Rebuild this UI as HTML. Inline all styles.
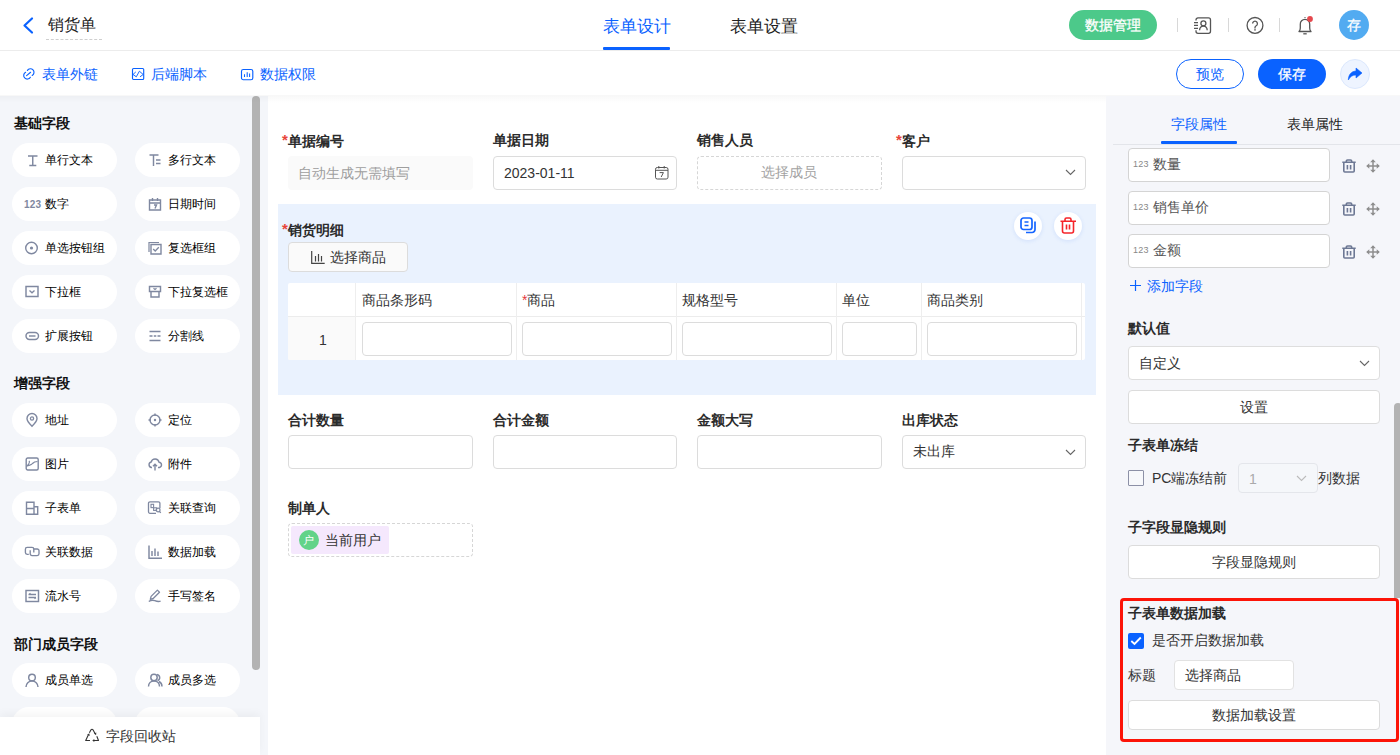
<!DOCTYPE html>
<html><head><meta charset="utf-8">
<style>
*{box-sizing:border-box;margin:0;padding:0}
html,body{width:1400px;height:755px;overflow:hidden;background:#fff;font-family:"Liberation Sans",sans-serif;color:#1f1f1f}
.a{position:absolute}
.t{position:absolute;white-space:nowrap;line-height:1}
svg{position:absolute;overflow:visible}
/* header */
#hdr{left:0;top:0;width:1400px;height:51px;background:#fff;border-bottom:1px solid #ececec}
#tb{left:0;top:51px;width:1400px;height:45px;background:#fff}
.pill{position:absolute;width:105px;height:34px;border-radius:17px;background:#fff}
.pill .t{left:33px;top:11px;font-size:12px;color:#000}
.pill svg{left:14px;top:11px}
.sec{position:absolute;left:14px;font-size:14px;font-weight:bold;color:#111;line-height:1}
.lbl{position:absolute;font-size:14px;font-weight:bold;color:#2b2b2b;line-height:1;white-space:nowrap}
.lbl i{font-style:normal;color:#e8453a;font-weight:bold;font-size:15px;position:relative;top:-1px}
.inp{position:absolute;height:34px;border:1px solid #dcdcdc;border-radius:4px;background:#fff}
.btnw{position:absolute;width:252px;border:1px solid #dcdcdc;border-radius:4px;background:#fff;font-size:14px;color:#333;text-align:center}
</style></head><body>

<!-- HEADER -->
<div id="hdr" class="a">
  <svg style="left:22px;top:17px" width="12" height="17" viewBox="0 0 12 17"><path d="M10 1.5 L2.5 8.5 L10 15.5" fill="none" stroke="#0a62ff" stroke-width="2.2" stroke-linecap="round" stroke-linejoin="round"/></svg>
  <div class="t" style="left:48px;top:17px;font-size:16px;color:#222">销货单</div>
  <div class="a" style="left:46px;top:39px;width:56px;height:0;border-top:1px dashed #cfcfcf"></div>

  <div class="t" style="left:603px;top:18px;font-size:16.5px;color:#0a62ff">表单设计</div>
  <div class="a" style="left:603px;top:47px;width:67px;height:3px;background:#0a62ff;border-radius:1px"></div>
  <div class="t" style="left:730px;top:18px;font-size:16.5px;color:#222">表单设置</div>

  <div class="a" style="left:1069px;top:10px;width:88px;height:30px;border-radius:15px;background:#4cc98a"></div>
  <div class="t" style="left:1085px;top:18px;font-size:14px;color:#fff;-webkit-text-stroke:0.3px #fff">数据管理</div>
  <div class="a" style="left:1177px;top:18px;width:1px;height:14px;background:#d8d8d8"></div>
  <div class="a" style="left:1228px;top:18px;width:1px;height:14px;background:#d8d8d8"></div>
  <div class="a" style="left:1279px;top:18px;width:1px;height:14px;background:#d8d8d8"></div>
  
  <svg style="left:1193px;top:16px" width="19" height="19" viewBox="0 0 19 19"><path d="M3 4.6V3.9a2 2 0 0 1 2-2h10.5a2 2 0 0 1 2 2v11.4a2 2 0 0 1-2 2H5a2 2 0 0 1-2-2V14.3" stroke="#555" stroke-width="1.3" fill="none"/><path d="M1 6.6h4M1 9.4h4M1 12.3h4" stroke="#555" stroke-width="1.3"/><circle cx="10.4" cy="7.3" r="2.5" stroke="#555" stroke-width="1.3" fill="none"/><path d="M6.6 14.2c0-2.3 1.7-4.2 3.8-4.2s3.8 1.9 3.8 4.2" stroke="#555" stroke-width="1.3" fill="none"/></svg>
  <svg style="left:1246px;top:17px" width="18" height="18" viewBox="0 0 18 18"><circle cx="9" cy="8.4" r="7.9" stroke="#555" stroke-width="1.3" fill="none"/><path d="M6.6 6.6a2.4 2.4 0 1 1 3.6 2.1c-0.8 0.5-1.2 1-1.2 1.9v0.8" stroke="#555" stroke-width="1.3" fill="none"/><circle cx="9" cy="12.9" r="0.8" fill="#555"/></svg>
  <svg style="left:1297px;top:16px" width="17" height="19" viewBox="0 0 17 19"><path d="M8 1.2v0.8" stroke="#555" stroke-width="1.4"/><path d="M2 15.5c1-0.8 1.3-1.8 1.3-3.5V8.2A4.7 4.7 0 0 1 8 3.3a4.7 4.7 0 0 1 4.7 4.9V12c0 1.7 0.3 2.7 1.3 3.5z" stroke="#555" stroke-width="1.3" fill="none" stroke-linejoin="round"/><path d="M6.3 17.8h3.4" stroke="#555" stroke-width="1.3"/><circle cx="13" cy="3" r="2.9" fill="#e5484d"/></svg>
<div class="a" style="left:1339px;top:10px;width:30px;height:30px;border-radius:15px;background:#52abf1"></div>
  <div class="t" style="left:1347px;top:18px;font-size:14px;color:#fff;-webkit-text-stroke:0.3px #fff">存</div>
</div>

<!-- TOOLBAR -->
<div id="tb" class="a">
  
  <svg style="left:22px;top:16px" width="14" height="14" viewBox="0 0 14 14"><path d="M3.6 5.3A3.6 3.6 0 1 0 8.4 10.3M5.4 3.4A3.6 3.6 0 1 1 10.2 8.5M4.6 8.6L8.6 5.3" stroke="#0a62ff" stroke-width="1.15" fill="none" stroke-linecap="round"/></svg>
  <svg style="left:131px;top:16px" width="14" height="14" viewBox="0 0 14 14"><rect x="1.5" y="1.5" width="11.2" height="11" rx="1" stroke="#0a62ff" stroke-width="1.15" fill="none"/><path d="M4.5 5.2L2 7.5 5.3 9.8 8.4 4.2 12.2 7.5 9.3 9.6" stroke="#0a62ff" stroke-width="0.95" fill="none" stroke-linejoin="round" stroke-linecap="round"/></svg>
  <svg style="left:240px;top:16px" width="14" height="14" viewBox="0 0 14 14"><rect x="1.5" y="2.5" width="11.3" height="10.2" rx="1.8" stroke="#0a62ff" stroke-width="1.15" fill="none"/><path d="M4.5 7.3v2.6M7.2 5.3v4.6M9.6 6.5v3.4" stroke="#0a62ff" stroke-width="1.05"/></svg>
<div class="t" style="left:42px;top:16px;font-size:14px;color:#0a62ff">表单外链</div>
  <div class="t" style="left:151px;top:16px;font-size:14px;color:#0a62ff">后端脚本</div>
  <div class="t" style="left:260px;top:16px;font-size:14px;color:#0a62ff">数据权限</div>
  <div class="a" style="left:1176px;top:8px;width:68px;height:30px;border-radius:15px;border:1px solid #0a62ff;background:#fff"></div>
  <div class="t" style="left:1196px;top:16px;font-size:14px;color:#0a62ff">预览</div>
  <div class="a" style="left:1258px;top:8px;width:68px;height:30px;border-radius:15px;background:#0a62ff"></div>
  <div class="t" style="left:1278px;top:16px;font-size:14px;color:#fff;-webkit-text-stroke:0.3px #fff">保存</div>
  <div class="a" style="left:1340px;top:8px;width:30px;height:30px;border-radius:15px;background:#eef4ff;border:1px solid #dce8fd"></div><svg style="left:1347px;top:16px" width="16" height="14" viewBox="0 0 16 14"><path d="M9 1l6 5-6 5V8C5.5 8 3.2 9.5 1.3 13 1.5 8 4 4.3 9 4z" fill="#0a62ff" stroke="#0a62ff" stroke-width="0.6" stroke-linejoin="round"/></svg>
</div>

<!-- LEFT PANEL -->
<div class="a" style="left:0;top:96px;width:268px;height:659px;background:#f4f6fa"></div>
<div class="sec" style="top:116px">基础字段</div>
<div class="sec" style="top:376px">增强字段</div>
<div class="sec" style="top:637px">部门成员字段</div>
<div class="pill" style="left:12px;top:143px"><svg width="14" height="14" viewBox="0 0 14 14" style="left:13px;top:10px"><path d="M3 3h9.5M4.3 12.5h7M7.75 3v9.5" stroke="#7f88a0" stroke-width="1.45" fill="none"/></svg><div class="t">单行文本</div></div>
<div class="pill" style="left:135px;top:143px"><svg width="14" height="14" viewBox="0 0 14 14" style="left:13px;top:10px"><path d="M1.5 2h9M5.5 2v11M8 7h4.5M8 10.5h4.5" stroke="#7f88a0" stroke-width="1.45" fill="none"/></svg><div class="t">多行文本</div></div>
<div class="pill" style="left:12px;top:187px"><svg width="14" height="14" viewBox="0 0 14 14" style="left:13px;top:10px"><text x="-0.9" y="11.2" style="font-family:'Liberation Sans';font-weight:bold;font-size:10px" fill="#7f88a0" letter-spacing="0.1">123</text></svg><div class="t">数字</div></div>
<div class="pill" style="left:135px;top:187px"><svg width="14" height="14" viewBox="0 0 14 14" style="left:13px;top:10px"><path d="M1.5 3h11v10h-11z M1.5 6h11 M4.5 1v3 M9.5 1v3 M6 8h2.5l-1.5 3.5" stroke="#7f88a0" stroke-width="1.4" fill="none"/></svg><div class="t">日期时间</div></div>
<div class="pill" style="left:12px;top:231px"><svg width="14" height="14" viewBox="0 0 14 14" style="left:13px;top:10px"><circle cx="6.5" cy="7" r="5.8" stroke="#7f88a0" stroke-width="1.4" fill="none"/><circle cx="6.5" cy="7" r="1.6" fill="#7f88a0"/></svg><div class="t">单选按钮组</div></div>
<div class="pill" style="left:135px;top:231px"><svg width="14" height="14" viewBox="0 0 14 14" style="left:13px;top:10px"><path d="M1 11V1.5h10" stroke="#7f88a0" stroke-width="1.2" fill="none"/><path d="M3 3.5h10v9.5H3z" stroke="#7f88a0" stroke-width="1.4" fill="none"/><path d="M5.2 8l2 2 3.6-3.8" stroke="#7f88a0" stroke-width="1.3" fill="none"/></svg><div class="t">复选框组</div></div>
<div class="pill" style="left:12px;top:275px"><svg width="14" height="14" viewBox="0 0 14 14" style="left:13px;top:10px"><path d="M1 1.5h12v10H1z" stroke="#7f88a0" stroke-width="1.45" fill="none"/><path d="M4.5 5.5l2.5 2.3 2.5-2.3" stroke="#7f88a0" stroke-width="1.3" fill="none"/></svg><div class="t">下拉框</div></div>
<div class="pill" style="left:135px;top:275px"><svg width="14" height="14" viewBox="0 0 14 14" style="left:13px;top:10px"><path d="M1.5 1.5h11v5h-11z M3 6.5v5.5h8V6.5" stroke="#7f88a0" stroke-width="1.45" fill="none"/><path d="M5.5 3.2l1.5 1.3 1.5-1.3" stroke="#7f88a0" stroke-width="1.2" fill="none"/></svg><div class="t">下拉复选框</div></div>
<div class="pill" style="left:12px;top:319px"><svg width="14" height="14" viewBox="0 0 14 14" style="left:13px;top:10px"><rect x="1" y="3.5" width="12.5" height="7" rx="3.5" stroke="#7f88a0" stroke-width="1.45" fill="none"/><path d="M4 7h6.5" stroke="#7f88a0" stroke-width="1.45"/></svg><div class="t">扩展按钮</div></div>
<div class="pill" style="left:135px;top:319px"><svg width="14" height="14" viewBox="0 0 14 14" style="left:13px;top:10px"><path d="M1.5 2.5h11M1.5 7h3M5.8 7h2.5M9.5 7h3M1.5 11.5h11" stroke="#7f88a0" stroke-width="1.4" fill="none"/></svg><div class="t">分割线</div></div>
<div class="pill" style="left:12px;top:403px"><svg width="14" height="14" viewBox="0 0 14 14" style="left:13px;top:10px"><path d="M7 13.2C4 10.3 2 8 2 5.5a5 5 0 0 1 10 0c0 2.5-2 4.8-5 7.7z" stroke="#7f88a0" stroke-width="1.4" fill="none"/><circle cx="7" cy="5.5" r="1.6" stroke="#7f88a0" stroke-width="1.3" fill="none"/></svg><div class="t">地址</div></div>
<div class="pill" style="left:135px;top:403px"><svg width="14" height="14" viewBox="0 0 14 14" style="left:13px;top:10px"><circle cx="7" cy="7" r="5" stroke="#7f88a0" stroke-width="1.4" fill="none"/><circle cx="7" cy="7" r="1.2" fill="#7f88a0"/><path d="M7 0.5v2.5M7 11v2.5M0.5 7h2.5M11 7h2.5" stroke="#7f88a0" stroke-width="1.4"/></svg><div class="t">定位</div></div>
<div class="pill" style="left:12px;top:447px"><svg width="14" height="14" viewBox="0 0 14 14" style="left:13px;top:10px"><rect x="1.2" y="1" width="12" height="12" rx="1.5" stroke="#7f88a0" stroke-width="1.4" fill="none"/><path d="M1.5 9.5C4 7 5 5 4 4M2 9c3-1 4.5-1 5.5-2.5 1-1.2 2-2 5-2" stroke="#7f88a0" stroke-width="1.2" fill="none"/></svg><div class="t">图片</div></div>
<div class="pill" style="left:135px;top:447px"><svg width="14" height="14" viewBox="0 0 14 14" style="left:13px;top:10px"><path d="M4 10.5H3.5A2.8 2.8 0 0 1 3.2 5 4 4 0 0 1 11 5.2a2.7 2.7 0 0 1 0.5 5.3H10" stroke="#7f88a0" stroke-width="1.4" fill="none"/><path d="M7 13.5V7.5M5 9.3l2-2 2 2" stroke="#7f88a0" stroke-width="1.4" fill="none"/></svg><div class="t">附件</div></div>
<div class="pill" style="left:12px;top:491px"><svg width="14" height="14" viewBox="0 0 14 14" style="left:13px;top:10px"><path d="M1.5 1.2h7.5v4.6h3.7v7.5H1.5z M1.5 7.5h7.5 M9 5.8v7.5" stroke="#7f88a0" stroke-width="1.4" fill="none"/></svg><div class="t">子表单</div></div>
<div class="pill" style="left:135px;top:491px"><svg width="14" height="14" viewBox="0 0 14 14" style="left:13px;top:10px"><path d="M8 12.3H2A1.5 1.5 0 0 1 0.5 10.8V2.3A1.5 1.5 0 0 1 2 0.8h8.4A1.5 1.5 0 0 1 11.9 2.3V7.3" stroke="#7f88a0" stroke-width="1.3" fill="none"/><rect x="3" y="3.3" width="2.6" height="3.3" stroke="#7f88a0" stroke-width="1.1" fill="none"/><rect x="5.6" y="6.8" width="3" height="2.6" stroke="#7f88a0" stroke-width="1.1" fill="none"/><circle cx="10.1" cy="9" r="1.9" stroke="#7f88a0" stroke-width="1.2" fill="none"/><path d="M11.4 10.4L12.8 11.9" stroke="#7f88a0" stroke-width="1.3"/></svg><div class="t">关联查询</div></div>
<div class="pill" style="left:12px;top:535px"><svg width="14" height="14" viewBox="0 0 14 14" style="left:13px;top:10px"><path d="M3.8 9.3H2.2A1.8 1.8 0 0 1 0.4 7.5V4.2A1.8 1.8 0 0 1 2.2 2.4H7A1.8 1.8 0 0 1 8.8 4.2V7.4" stroke="#7f88a0" stroke-width="1.35" fill="none"/><path d="M5.2 5.2V8.8A1.8 1.8 0 0 0 7 10.6H12.2A1.8 1.8 0 0 0 14 8.8V5.8A1.8 1.8 0 0 0 12.2 4H8.8" stroke="#7f88a0" stroke-width="1.35" fill="none"/></svg><div class="t">关联数据</div></div>
<div class="pill" style="left:135px;top:535px"><svg width="14" height="14" viewBox="0 0 14 14" style="left:13px;top:10px"><path d="M1 0.5v12.8h13M4 6v5M7 3.5v7.5M10 6.5v4.5" stroke="#7f88a0" stroke-width="1.45" fill="none"/></svg><div class="t">数据加载</div></div>
<div class="pill" style="left:12px;top:579px"><svg width="14" height="14" viewBox="0 0 14 14" style="left:13px;top:10px"><rect x="1" y="1.5" width="12.5" height="11" stroke="#7f88a0" stroke-width="1.45" fill="none"/><path d="M3.5 5.5h7.5M3.5 8.5h7.5M5.5 4.3l-1.5 1.2M9.5 9.7l1.5-1.2" stroke="#7f88a0" stroke-width="1.3" fill="none"/></svg><div class="t">流水号</div></div>
<div class="pill" style="left:135px;top:579px"><svg width="14" height="14" viewBox="0 0 14 14" style="left:13px;top:10px"><path d="M2.3 10.3l0.8-2.9 6.3-6.3 2.1 2.1-6.3 6.3z" stroke="#7f88a0" stroke-width="1.3" fill="none" stroke-linejoin="round"/><path d="M0.8 12.6c2-1.5 4-1.7 6-0.9s4 1.1 5.8 0.5" stroke="#7f88a0" stroke-width="1.3" fill="none"/></svg><div class="t">手写签名</div></div>
<div class="pill" style="left:12px;top:663px"><svg width="14" height="14" viewBox="0 0 14 14" style="left:13px;top:10px"><circle cx="7" cy="4.5" r="3.3" stroke="#7f88a0" stroke-width="1.45" fill="none"/><path d="M1 14c0-3.5 2.7-6 6-6s6 2.5 6 6" stroke="#7f88a0" stroke-width="1.45" fill="none"/></svg><div class="t">成员单选</div></div>
<div class="pill" style="left:135px;top:663px"><svg width="14" height="14" viewBox="0 0 14 14" style="left:13px;top:10px"><circle cx="6" cy="4.5" r="3.2" stroke="#7f88a0" stroke-width="1.45" fill="none"/><path d="M0.5 13.5c0-3.3 2.4-5.5 5.5-5.5s5.5 2.2 5.5 5.5M9 1.5a3.2 3.2 0 0 1 0.5 6.2M11 8.5c1.8 1 3 2.8 3 5" stroke="#7f88a0" stroke-width="1.45" fill="none"/></svg><div class="t">成员多选</div></div>
<div class="pill" style="left:12px;top:707px"></div>
<div class="pill" style="left:135px;top:707px"></div>
<div class="a" style="left:252px;top:96px;width:8px;height:574px;border-radius:4px;background:#b3b3b3"></div>
<div class="a" style="left:0;top:717px;width:260px;height:38px;background:#fff;box-shadow:0 -4px 8px rgba(0,0,0,0.04)"></div>
<svg style="left:85px;top:728px" width="15" height="15" viewBox="0 0 15 15"><path d="M5 12.5H0.7L3.4 6.7M4.4 4.8L6 1.8Q7 0.6 8 1.8L10 5.4M11.8 8.2L13.5 12.5H8.5" stroke="#333" stroke-width="1.1" fill="none" stroke-linejoin="round"/><path d="M2.2 6.8L4.3 5.2 4.7 8.1Z M8.9 5.6L11.3 4.6 11.1 7.3Z M7.3 12.5L9.3 10.9V14.1Z" fill="#333"/></svg><div class="t" style="left:106px;top:729px;font-size:14px;color:#333">字段回收站</div>


<!-- CENTER -->
<div class="a" style="left:268px;top:96px;width:838px;height:659px;background:#fff"></div>


<!-- shadow under toolbar -->
<div class="a" style="left:0;top:95px;width:1400px;height:8px;background:linear-gradient(rgba(0,0,0,0.03),rgba(0,0,0,0))"></div>

<div class="lbl" style="left:282px;top:133px"><i>*</i>单据编号</div>
<div class="a" style="left:288px;top:156px;width:185px;height:34px;border-radius:4px;background:#fafafa"></div>
<div class="t" style="left:298px;top:166px;font-size:14px;color:#9e9e9e">自动生成无需填写</div>

<div class="lbl" style="left:493px;top:133px">单据日期</div>
<div class="inp" style="left:493px;top:156px;width:184px"></div>
<div class="t" style="left:504px;top:166px;font-size:14px;color:#333">2023-01-11</div>
<svg style="left:654px;top:165px" width="15" height="15" viewBox="0 0 15 15"><rect x="1.5" y="2.5" width="12.5" height="11.5" rx="1.8" stroke="#555" stroke-width="1" fill="none"/><path d="M1.5 5.3h12.5M4.8 1v2.5M10.2 1v2.5" stroke="#555" stroke-width="1"/><path d="M5.6 7.6h3.8L7.2 12" stroke="#555" stroke-width="1" fill="none"/></svg>

<div class="lbl" style="left:697px;top:133px">销售人员</div>
<div class="a" style="left:697px;top:156px;width:185px;height:34px;border-radius:4px;border:1px dashed #d6d6d6"></div>
<div class="t" style="left:761px;top:165px;font-size:14px;color:#a3a3a3">选择成员</div>

<div class="lbl" style="left:896px;top:133px"><i>*</i>客户</div>
<div class="inp" style="left:902px;top:156px;width:184px"></div>
<svg style="left:1065px;top:169px" width="11" height="7" viewBox="0 0 11 7"><path d="M1 1l4.5 4.5L10 1" stroke="#666" stroke-width="1.1" fill="none"/></svg>

<!-- subform -->
<div class="a" style="left:278px;top:204px;width:818px;height:191px;background:#eaf2fe"></div>
<div class="lbl" style="left:282px;top:222px"><i>*</i>销货明细</div>
<div class="a" style="left:288px;top:242px;width:120px;height:30px;border-radius:4px;border:1px solid #dcdcdc;background:#fafafa"></div>
<svg style="left:311px;top:251px" width="14" height="13" viewBox="0 0 14 13"><path d="M0.7 0v12.3h13M4.5 5v5.5M7.5 3v7.5M10.5 5v5.5" stroke="#444" stroke-width="1.2" fill="none"/></svg>
<div class="t" style="left:330px;top:250px;font-size:14px;color:#333">选择商品</div>

<div class="a" style="left:1014px;top:212px;width:28px;height:28px;border-radius:14px;background:#fff;box-shadow:0 1px 4px rgba(30,100,230,0.12)"></div>
<svg style="left:1020px;top:217px" width="17" height="17" viewBox="0 0 17 17"><rect x="1" y="1" width="11" height="11.5" rx="2.5" stroke="#1565ff" stroke-width="1.7" fill="none"/><path d="M4.5 5h4M4.5 8.5h4" stroke="#1565ff" stroke-width="1.7"/><path d="M15 4.5v8a3 3 0 0 1-3 3H6" stroke="#1565ff" stroke-width="1.7" fill="none"/></svg>
<div class="a" style="left:1054px;top:212px;width:28px;height:28px;border-radius:14px;background:#fff;box-shadow:0 1px 4px rgba(30,100,230,0.12)"></div>
<svg style="left:1060px;top:217px" width="17" height="17" viewBox="0 0 17 17"><path d="M0.5 4.3h15.5M5 4V2.5a1.5 1.5 0 0 1 1.5-1.5h3a1.5 1.5 0 0 1 1.5 1.5V4" stroke="#f5242a" stroke-width="1.6" fill="none"/><path d="M2.5 4.5v9.5a2 2 0 0 0 2 2h7a2 2 0 0 0 2-2V4.5M6.5 7.5v5M9.5 7.5v5" stroke="#f5242a" stroke-width="1.6" fill="none"/></svg>

<!-- table -->
<div class="a" style="left:288px;top:283px;width:797px;height:77px;background:#fff;overflow:hidden;border-radius:2px">
  <div class="a" style="left:0;top:34px;width:67px;height:43px;background:#fafafa"></div>
  <div class="a" style="left:0;top:33px;width:797px;height:1px;background:#ececec"></div>
  <div class="a" style="left:67px;top:0;width:1px;height:77px;background:#eeeeee"></div>
  <div class="a" style="left:228px;top:0;width:1px;height:77px;background:#eeeeee"></div>
  <div class="a" style="left:388px;top:0;width:1px;height:77px;background:#eeeeee"></div>
  <div class="a" style="left:548px;top:0;width:1px;height:77px;background:#eeeeee"></div>
  <div class="a" style="left:633px;top:0;width:1px;height:77px;background:#eeeeee"></div>
  <div class="a" style="left:793px;top:0;width:1px;height:77px;background:#eeeeee"></div>
  <div class="t" style="left:74px;top:10px;font-size:14px;color:#333">商品条形码</div>
  <div class="t" style="left:234px;top:10px;font-size:14px;color:#333"><span style="color:#e5383b">*</span>商品</div>
  <div class="t" style="left:394px;top:10px;font-size:14px;color:#333">规格型号</div>
  <div class="t" style="left:554px;top:10px;font-size:14px;color:#333">单位</div>
  <div class="t" style="left:639px;top:10px;font-size:14px;color:#333">商品类别</div>
  <div class="t" style="left:31px;top:50px;font-size:14px;color:#333">1</div>
  <div class="inp" style="left:74px;top:39px;width:150px"></div>
  <div class="inp" style="left:234px;top:39px;width:150px"></div>
  <div class="inp" style="left:394px;top:39px;width:150px"></div>
  <div class="inp" style="left:554px;top:39px;width:75px"></div>
  <div class="inp" style="left:639px;top:39px;width:150px"></div>
</div>

<div class="lbl" style="left:288px;top:413px">合计数量</div>
<div class="inp" style="left:288px;top:435px;width:185px"></div>
<div class="lbl" style="left:493px;top:413px">合计金额</div>
<div class="inp" style="left:493px;top:435px;width:184px"></div>
<div class="lbl" style="left:697px;top:413px">金额大写</div>
<div class="inp" style="left:697px;top:435px;width:185px"></div>
<div class="lbl" style="left:902px;top:413px">出库状态</div>
<div class="inp" style="left:902px;top:435px;width:184px"></div>
<div class="t" style="left:913px;top:444px;font-size:14px;color:#333">未出库</div>
<svg style="left:1065px;top:449px" width="11" height="7" viewBox="0 0 11 7"><path d="M1 1l4.5 4.5L10 1" stroke="#666" stroke-width="1.1" fill="none"/></svg>

<div class="lbl" style="left:288px;top:501px">制单人</div>
<div class="a" style="left:288px;top:523px;width:185px;height:34px;border-radius:4px;border:1px dashed #d6d6d6"></div>
<div class="a" style="left:291px;top:526px;width:98px;height:28px;border-radius:2px;background:#f5e8fd"></div>
<div class="a" style="left:299px;top:530px;width:20px;height:20px;border-radius:10px;background:#62d389"></div>
<div class="t" style="left:303px;top:535px;font-size:11px;color:#fff">户</div>
<div class="t" style="left:325px;top:533px;font-size:14px;color:#333">当前用户</div>

<!-- RIGHT PANEL -->
<div class="a" style="left:1106px;top:96px;width:294px;height:659px;background:#f5f6fa"></div>
<div class="t" style="left:1171px;top:117px;font-size:14px;color:#0a62ff">字段属性</div>
<div class="t" style="left:1287px;top:117px;font-size:14px;color:#222">表单属性</div>
<div class="a" style="left:1113px;top:144px;width:287px;height:1px;background:#e3e5ea"></div>
<div class="a" style="left:1161px;top:141px;width:76px;height:3px;background:#0a62ff;border-radius:1px"></div>
<div class="inp" style="left:1128px;top:148px;width:202px;height:34px;border-color:#d4d4d4"></div>
<div class="t" style="left:1133px;top:160px;font-size:9px;color:#888;letter-spacing:0.3px">123</div>
<div class="t" style="left:1153px;top:157px;font-size:14px;color:#555">数量</div>
<svg style="left:1342px;top:159px" width="14" height="14" viewBox="0 0 14 14"><path d="M0.3 3.3h13.4M4.3 3.2V2.2a1.2 1.2 0 0 1 1.2-1.2h3a1.2 1.2 0 0 1 1.2 1.2v1" stroke="#6d7894" stroke-width="1.6" fill="none"/><path d="M1.8 3.6v8.4a1 1 0 0 0 1 1h8.4a1 1 0 0 0 1-1V3.6M5.4 6v4.6M8.6 6v4.6" stroke="#6d7894" stroke-width="1.6" fill="none"/></svg>
<svg style="left:1366px;top:159px" width="14" height="14" viewBox="0 0 14 14"><path d="M7 1v12M1 7h12" stroke="#8e8e8e" stroke-width="1.5"/><path d="M4.2 3.3L7 0.2 9.8 3.3zM4.2 10.7L7 13.8 9.8 10.7zM3.3 4.2L0.2 7 3.3 9.8zM10.7 4.2L13.8 7 10.7 9.8z" fill="#8e8e8e"/></svg>
<div class="inp" style="left:1128px;top:191px;width:202px;height:34px;border-color:#d4d4d4"></div>
<div class="t" style="left:1133px;top:203px;font-size:9px;color:#888;letter-spacing:0.3px">123</div>
<div class="t" style="left:1153px;top:200px;font-size:14px;color:#555">销售单价</div>
<svg style="left:1342px;top:202px" width="14" height="14" viewBox="0 0 14 14"><path d="M0.3 3.3h13.4M4.3 3.2V2.2a1.2 1.2 0 0 1 1.2-1.2h3a1.2 1.2 0 0 1 1.2 1.2v1" stroke="#6d7894" stroke-width="1.6" fill="none"/><path d="M1.8 3.6v8.4a1 1 0 0 0 1 1h8.4a1 1 0 0 0 1-1V3.6M5.4 6v4.6M8.6 6v4.6" stroke="#6d7894" stroke-width="1.6" fill="none"/></svg>
<svg style="left:1366px;top:202px" width="14" height="14" viewBox="0 0 14 14"><path d="M7 1v12M1 7h12" stroke="#8e8e8e" stroke-width="1.5"/><path d="M4.2 3.3L7 0.2 9.8 3.3zM4.2 10.7L7 13.8 9.8 10.7zM3.3 4.2L0.2 7 3.3 9.8zM10.7 4.2L13.8 7 10.7 9.8z" fill="#8e8e8e"/></svg>
<div class="inp" style="left:1128px;top:234px;width:202px;height:34px;border-color:#d4d4d4"></div>
<div class="t" style="left:1133px;top:246px;font-size:9px;color:#888;letter-spacing:0.3px">123</div>
<div class="t" style="left:1153px;top:243px;font-size:14px;color:#555">金额</div>
<svg style="left:1342px;top:245px" width="14" height="14" viewBox="0 0 14 14"><path d="M0.3 3.3h13.4M4.3 3.2V2.2a1.2 1.2 0 0 1 1.2-1.2h3a1.2 1.2 0 0 1 1.2 1.2v1" stroke="#6d7894" stroke-width="1.6" fill="none"/><path d="M1.8 3.6v8.4a1 1 0 0 0 1 1h8.4a1 1 0 0 0 1-1V3.6M5.4 6v4.6M8.6 6v4.6" stroke="#6d7894" stroke-width="1.6" fill="none"/></svg>
<svg style="left:1366px;top:245px" width="14" height="14" viewBox="0 0 14 14"><path d="M7 1v12M1 7h12" stroke="#8e8e8e" stroke-width="1.5"/><path d="M4.2 3.3L7 0.2 9.8 3.3zM4.2 10.7L7 13.8 9.8 10.7zM3.3 4.2L0.2 7 3.3 9.8zM10.7 4.2L13.8 7 10.7 9.8z" fill="#8e8e8e"/></svg>

<svg style="left:1130px;top:280px" width="11" height="11" viewBox="0 0 11 11"><path d="M5.5 0v11M0 5.5h11" stroke="#0a62ff" stroke-width="1.2"/></svg>
<div class="t" style="left:1147px;top:279px;font-size:14px;color:#0a62ff">添加字段</div>

<div class="lbl" style="left:1128px;top:321px">默认值</div>
<div class="inp" style="left:1128px;top:346px;width:252px;border-color:#dedede"></div>
<div class="t" style="left:1139px;top:356px;font-size:14px;color:#333">自定义</div>
<svg style="left:1359px;top:360px" width="11" height="7" viewBox="0 0 11 7"><path d="M1 1l4.5 4.5L10 1" stroke="#666" stroke-width="1.1" fill="none"/></svg>
<div class="btnw" style="left:1128px;top:390px;height:34px;line-height:32px">设置</div>

<div class="lbl" style="left:1128px;top:438px">子表单冻结</div>
<div class="a" style="left:1128px;top:470px;width:16px;height:16px;border:1px solid #8c90a6;border-radius:1px;background:#f7f8fb"></div>
<div class="t" style="left:1152px;top:471px;font-size:14px;color:#333">PC端冻结前</div>
<div class="a" style="left:1238px;top:463px;width:80px;height:30px;border:1px solid #e4e6eb;border-radius:4px;background:#f5f7fa"></div>
<div class="t" style="left:1249px;top:472px;font-size:14px;color:#aaa">1</div>
<svg style="left:1296px;top:475px" width="11" height="7" viewBox="0 0 11 7"><path d="M1 1l4.5 4.5L10 1" stroke="#bbb" stroke-width="1.1" fill="none"/></svg>
<div class="t" style="left:1318px;top:471px;font-size:14px;color:#333">列数据</div>

<div class="lbl" style="left:1128px;top:520px">子字段显隐规则</div>
<div class="btnw" style="left:1128px;top:545px;height:34px;line-height:32px">字段显隐规则</div>

<div class="a" style="left:1394px;top:403px;width:8px;height:195px;border-radius:4px 4px 0 0;background:#b3b3b3"></div>

<div class="a" style="left:1120px;top:598px;width:279px;height:144px;border:3px solid #fc1408;border-radius:4px"></div>
<div class="lbl" style="left:1128px;top:606px">子表单数据加载</div>
<div class="a" style="left:1128px;top:633px;width:16px;height:16px;border-radius:2px;background:#0a62ff"></div>
<svg style="left:1130px;top:636px" width="12" height="10" viewBox="0 0 12 10"><path d="M1.3 5l3.2 3 6.3-6.5" stroke="#fff" stroke-width="1.8" fill="none"/></svg>
<div class="t" style="left:1152px;top:633px;font-size:14px;color:#333">是否开启数据加载</div>
<div class="t" style="left:1128px;top:668px;font-size:14px;color:#333">标题</div>
<div class="a" style="left:1174px;top:660px;width:120px;height:30px;border:1px solid #e2e2e2;border-radius:4px;background:#fff"></div>
<div class="t" style="left:1185px;top:668px;font-size:14px;color:#333">选择商品</div>
<div class="btnw" style="left:1128px;top:700px;height:30px;line-height:28px">数据加载设置</div>


</body></html>
